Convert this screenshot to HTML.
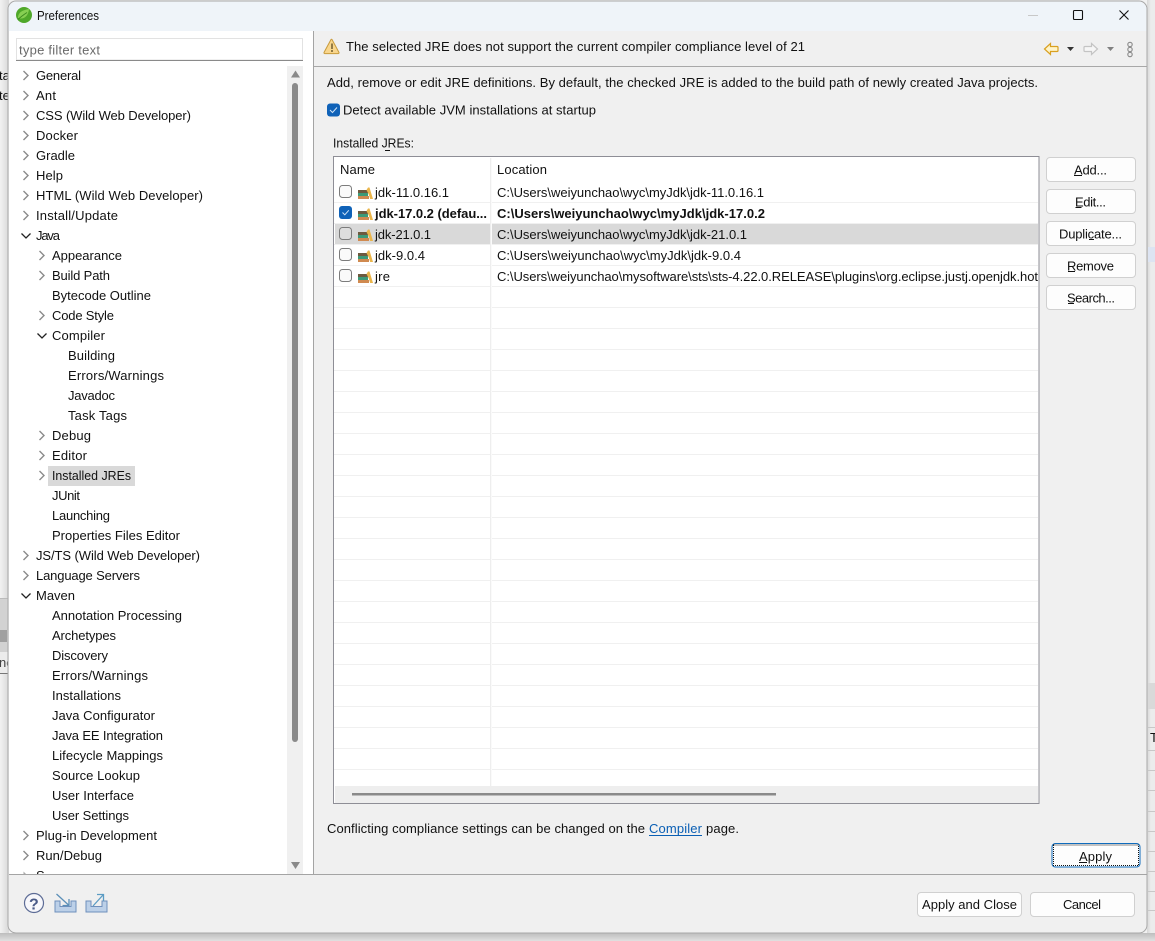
<!DOCTYPE html>
<html><head><meta charset="utf-8"><title>Preferences</title>
<style>
html,body{margin:0;padding:0;width:1155px;height:941px;overflow:hidden;background:#f1f1f1}
svg{display:block;font-family:"Liberation Sans",sans-serif;font-size:13px;fill:#111}
.c{fill:none;stroke:#8a8a8a;stroke-width:1.4}
.d{fill:none;stroke:#222;stroke-width:1.3}
.b{fill:#fdfdfd;stroke:#d0d0d0;stroke-width:1}
.l{stroke:#f0f0f0;stroke-width:1}
.u{stroke:#111;stroke-width:1}
.cb{fill:#fafafa;stroke:#7c7c7c;stroke-width:1}
</style></head><body>
<svg width="1155" height="941" viewBox="0 0 1155 941" xmlns="http://www.w3.org/2000/svg">
<defs>
<linearGradient id="sl" x1="0" x2="1"><stop offset="0" stop-color="#f2f2f2"/><stop offset="1" stop-color="#d8d8d8"/></linearGradient>
<linearGradient id="sr" x1="0" x2="1"><stop offset="0" stop-color="#d2d2d2"/><stop offset="1" stop-color="#ececec"/></linearGradient>
<linearGradient id="sb" x1="0" x2="0" y1="0" y2="1"><stop offset="0" stop-color="#bdbdbd"/><stop offset="1" stop-color="#e0e0e0"/></linearGradient>
<g id="jre">
<path d="M0 5h10v3h-10z" fill="#6d5a3f"/><path d="M0 8h10v3h-10z" fill="#3c9a78"/><path d="M0 11h11v3h-11z" fill="#d08a50"/>
<path d="M8.500 5l1.500-2.500h1.500l3.500 11.500h-2.800l-1.400-4.500z" fill="#eab54a"/>
</g>
</defs>
<rect width="1155" height="941" fill="#f1f1f1"/>
<rect x="0" y="0" width="9" height="941" fill="url(#sl)"/>
<rect x="0" y="598" width="9" height="54" fill="#d2d2d2"/>
<rect x="0" y="630" width="7" height="12" fill="#a0a0a0"/>
<rect x="0" y="652" width="9" height="21" fill="#ececec"/>
<path d="M0 598.500h9" stroke="#bbb"/>
<path d="M0 673.500h9" stroke="#777"/>
<svg x="0" y="60" width="8" height="50" viewBox="0 60 8 50"><text x="-1" y="80">ta</text><text x="-1" y="100">te</text></svg>
<svg x="0" y="652" width="8" height="20" viewBox="0 652 8 20"><text x="-1" y="667" fill="#444">ne</text></svg>
<rect x="1147" y="0" width="8" height="941" fill="#ececec"/>
<rect x="1147" y="0" width="4" height="941" fill="url(#sr)" opacity=".8"/>
<rect x="1148" y="247" width="7" height="15" fill="#dde4f2"/>
<rect x="1148" y="683" width="7" height="26" fill="#d9d9d9"/>
<path d="M1148 727.500h7M1148 750.500h7M1148 770.500h7M1148 790.500h7M1148 811.500h7M1148 831.500h7M1148 851.500h7M1148 871.500h7M1148 891.500h7M1148 910.500h7" stroke="#c8c8c8"/>
<text x="1150" y="742">T</text>
<rect x="0" y="933" width="1155" height="8" fill="url(#sb)"/>
<path d="M8 9a8 8 0 0 1 8-8H1139a8 8 0 0 1 8 8V925a8 8 0 0 1-8 8H16a8 8 0 0 1-8-8Z" fill="#f0f0f0" stroke="#a8a8a8" stroke-width="1"/>
<path d="M8.500 31V9a8 8 0 0 1 8-7.500H1139a8 8 0 0 1 7.500 7.500V31Z" fill="#eff4f9"/>
<rect x="9" y="31" width="304" height="843" fill="#fff"/>
<rect x="287" y="66" width="16" height="808" fill="#f0f0f0"/>
<path d="M313.500 31V874" stroke="#a4a4a4"/>
<path d="M314 66.500H1147" stroke="#a8a8a8"/>
<path d="M9 874.500H1147" stroke="#a4a4a4"/>

<circle cx="24" cy="15" r="8" fill="#4fa82a"/>
<path d="M18 18c0-6 5-8 11-9-.5 6-4 10-9 9.500z" fill="#86cf52"/>
<path d="M18 19.500c3-3 6-5 9-7" stroke="#3c8a20" fill="none"/>
<text x="37" y="20" textLength="62" lengthAdjust="spacingAndGlyphs">Preferences</text>
<path d="M1028 15.500h10" stroke="#c8c8c8"/>
<rect x="1073.500" y="10.500" width="9" height="9" rx="1" fill="none" stroke="#111" stroke-width="1.100"/>
<path d="M1119.500 10.500l9 9M1128.500 10.500l-9 9" stroke="#111" stroke-width="1.100"/>

<rect x="16.500" y="38.500" width="286" height="21.500" fill="#fff" stroke="#e2e2e2"/>
<path d="M16 60.500H303" stroke="#8a8a8a"/>
<text x="19" y="54.500" textLength="81" fill="#6a6a6a">type filter text</text>

<g>
<text x="36" y="80" textLength="45">General</text>
<text x="36" y="100" textLength="20">Ant</text>
<text x="36" y="120" textLength="155">CSS (Wild Web Developer)</text>
<text x="36" y="140" textLength="42">Docker</text>
<text x="36" y="160" textLength="39">Gradle</text>
<text x="36" y="180" textLength="27">Help</text>
<text x="36" y="200" textLength="167">HTML (Wild Web Developer)</text>
<text x="36" y="220" textLength="82">Install/Update</text>
<text x="36" y="240" textLength="24">Java</text>
<text x="52" y="260" textLength="70">Appearance</text>
<text x="52" y="280" textLength="58">Build Path</text>
<text x="52" y="300" textLength="99">Bytecode Outline</text>
<text x="52" y="320" textLength="62">Code Style</text>
<text x="52" y="340" textLength="53">Compiler</text>
<text x="68" y="360" textLength="47">Building</text>
<text x="68" y="380" textLength="96">Errors/Warnings</text>
<text x="68" y="400" textLength="47">Javadoc</text>
<text x="68" y="420" textLength="59">Task Tags</text>
<text x="52" y="440" textLength="39">Debug</text>
<text x="52" y="460" textLength="35">Editor</text>
<rect x="48" y="466" width="87" height="20" fill="#d9d9d9"/>
<text x="52" y="480" textLength="79" lengthAdjust="spacingAndGlyphs">Installed JREs</text>
<text x="52" y="500" textLength="28">JUnit</text>
<text x="52" y="520" textLength="58">Launching</text>
<text x="52" y="540" textLength="128">Properties Files Editor</text>
<text x="36" y="560" textLength="164">JS/TS (Wild Web Developer)</text>
<text x="36" y="580" textLength="104">Language Servers</text>
<text x="36" y="600" textLength="39">Maven</text>
<text x="52" y="620" textLength="130">Annotation Processing</text>
<text x="52" y="640" textLength="64">Archetypes</text>
<text x="52" y="660" textLength="56">Discovery</text>
<text x="52" y="680" textLength="96">Errors/Warnings</text>
<text x="52" y="700" textLength="69">Installations</text>
<text x="52" y="720" textLength="103">Java Configurator</text>
<text x="52" y="740" textLength="111">Java EE Integration</text>
<text x="52" y="760" textLength="111">Lifecycle Mappings</text>
<text x="52" y="780" textLength="88">Source Lookup</text>
<text x="52" y="800" textLength="82">User Interface</text>
<text x="52" y="820" textLength="77">User Settings</text>
<text x="36" y="840" textLength="121">Plug-in Development</text>
<text x="36" y="860" textLength="66">Run/Debug</text>
</g>
<svg x="36" y="866" width="10" height="8" viewBox="0 866 10 8"><text x="0" y="880">S</text></svg>

<path class="c" d="M23.500 71l4.500 4.500-4.500 4.500M23.500 91l4.500 4.500-4.500 4.500M23.500 111l4.500 4.500-4.500 4.500M23.500 131l4.500 4.500-4.500 4.500M23.500 151l4.500 4.500-4.500 4.500M23.500 171l4.500 4.500-4.500 4.500M23.500 191l4.500 4.500-4.500 4.500M23.500 211l4.500 4.500-4.500 4.500M23.500 551l4.500 4.500-4.500 4.500M23.500 571l4.500 4.500-4.500 4.500M23.500 831l4.500 4.500-4.500 4.500M23.500 851l4.500 4.500-4.500 4.500M39.500 251l4.500 4.500-4.500 4.500M39.500 271l4.500 4.500-4.500 4.500M39.500 311l4.500 4.500-4.500 4.500M39.500 431l4.500 4.500-4.500 4.500M39.500 451l4.500 4.500-4.500 4.500M39.500 471l4.500 4.500-4.500 4.500"/>
<path class="d" d="M21.500 233.500l4.500 4.500 4.500-4.500M21.500 593.500l4.500 4.500 4.500-4.500M37.500 333.500l4.500 4.500 4.500-4.500"/>
<path d="M23.500 871.500l2.500 2.500h-2.500z" fill="#aaa"/>

<path d="M295.500 70.500l-4.500 7h9z" fill="#8a8a8a"/>
<rect x="292" y="83" width="6" height="659" rx="3" fill="#8a8a8a"/>
<path d="M291 862h9l-4.500 7z" fill="#8a8a8a"/>

<path d="M332 39.500l7 13a.8.8 0 0 1-.7 1.100h-13.600a.8.8 0 0 1-.7-1.100l7-13a.6.6 0 0 1 1 0z" fill="#f9d68c" stroke="#c79a3c"/>
<path d="M332 43.500v5.500M332 50v2" stroke="#5a4a20" stroke-width="1.300"/>
<text x="346" y="51" textLength="459">The selected JRE does not support the current compiler compliance level of 21</text>
<path d="M1044.500 49l6-5.500v3h6.500a1 1 0 0 1 1 1v3a1 1 0 0 1-1 1h-6.500v3z" fill="#fff4c8" stroke="#d9a020" stroke-width="1.200"/>
<path d="M1067 47h7l-3.500 4z" fill="#333"/>
<path d="M1097.500 49l-6-5.500v3h-6.500a1 1 0 0 0-1 1v3a1 1 0 0 0 1 1h6.500v3z" fill="#f6f6f6" stroke="#c4c4c4" stroke-width="1.200"/>
<path d="M1107 47h7l-3.500 4z" fill="#808080"/>
<g fill="#eee" stroke="#8a8a8a" stroke-width="1.100"><circle cx="1130" cy="44.500" r="2.200"/><circle cx="1130" cy="49.500" r="2.200"/><circle cx="1130" cy="54.500" r="2.200"/></g>

<text x="327" y="87" textLength="711">Add, remove or edit JRE definitions. By default, the checked JRE is added to the build path of newly created Java projects.</text>
<rect x="327" y="103.500" width="13" height="13" rx="3" fill="#0f62b8"/>
<path d="M330 110l2.500 2.500 4.500-5" fill="none" stroke="#cfe3f7" stroke-width="1"/>
<text x="343" y="114.500" textLength="253">Detect available JVM installations at startup</text>
<text x="333" y="147.500" textLength="81" lengthAdjust="spacingAndGlyphs">Installed JREs:</text>
<path class="u" d="M385 150.500h5"/>

<rect x="333.500" y="156.500" width="705.500" height="647" fill="#fff" stroke="#8e8e96" stroke-width="1"/>
<rect x="335" y="786" width="703" height="17" fill="#eeeeee"/>
<rect x="352" y="793" width="424" height="2.500" fill="#8a8a8a"/>
<rect x="335" y="224" width="703" height="20" fill="#d9d9d9"/>
<path class="l" d="M334 202.500H1038M334 223.500H1038M334 244.500H1038M334 265.500H1038M334 286.500H1038M334 307.500H1038M334 328.500H1038M334 349.500H1038M334 370.500H1038M334 391.500H1038M334 412.500H1038M334 433.500H1038M334 454.500H1038M334 475.500H1038M334 496.500H1038M334 517.500H1038M334 538.500H1038M334 559.500H1038M334 580.500H1038M334 601.500H1038M334 622.500H1038M334 643.500H1038M334 664.500H1038M334 685.500H1038M334 706.500H1038M334 727.500H1038M334 748.500H1038M334 769.500H1038"/>
<path d="M490.500 158V786" stroke="#eeeeee" fill="none"/>
<path d="M491.500 158V786" stroke="#fafafa" fill="none"/>
<text x="340" y="174" textLength="35">Name</text>
<text x="497" y="174" textLength="50">Location</text>

<rect class="cb" x="339.500" y="185.500" width="12" height="12" rx="3"/>
<use href="#jre" x="358" y="185"/>
<text x="375" y="197" textLength="74">jdk-11.0.16.1</text>
<text x="497" y="197" textLength="267">C:\Users\weiyunchao\wyc\myJdk\jdk-11.0.16.1</text>

<rect x="339" y="206" width="13" height="13" rx="3" fill="#0f62b8"/>
<path d="M342.500 212.500l2.300 2.300 4-4.500" fill="none" stroke="#cfe3f7" stroke-width="1"/>
<use href="#jre" x="358" y="206"/>
<text x="375" y="218" textLength="112" font-weight="bold">jdk-17.0.2 (defau...</text>
<text x="497" y="218" textLength="268" font-weight="bold">C:\Users\weiyunchao\wyc\myJdk\jdk-17.0.2</text>

<rect class="cb" x="339.500" y="227.500" width="12" height="12" rx="3" style="fill:#dedede"/>
<use href="#jre" x="358" y="227"/>
<text x="375" y="239" textLength="56">jdk-21.0.1</text>
<text x="497" y="239" textLength="250">C:\Users\weiyunchao\wyc\myJdk\jdk-21.0.1</text>

<rect class="cb" x="339.500" y="248.500" width="12" height="12" rx="3"/>
<use href="#jre" x="358" y="248"/>
<text x="375" y="260" textLength="50">jdk-9.0.4</text>
<text x="497" y="260" textLength="244">C:\Users\weiyunchao\wyc\myJdk\jdk-9.0.4</text>

<rect class="cb" x="339.500" y="269.500" width="12" height="12" rx="3"/>
<use href="#jre" x="358" y="269"/>
<text x="375" y="281" textLength="15">jre</text>
<text x="497" y="281" textLength="541">C:\Users\weiyunchao\mysoftware\sts\sts-4.22.0.RELEASE\plugins\org.eclipse.justj.openjdk.hot</text>

<rect class="b" x="1046.500" y="157.500" width="89" height="24" rx="3.500"/>
<text x="1074" y="174.500" textLength="33">Add...</text><path class="u" d="M1074 175.500h8"/>
<rect class="b" x="1046.500" y="189.500" width="89" height="24" rx="3.500"/>
<text x="1075" y="206.500" textLength="31">Edit...</text><path class="u" d="M1075.500 207.500h6"/>
<rect class="b" x="1046.500" y="221.500" width="89" height="24" rx="3.500"/>
<text x="1059" y="238.500" textLength="63">Duplicate...</text><path class="u" d="M1089 239.500h5"/>
<rect class="b" x="1046.500" y="253.500" width="89" height="24" rx="3.500"/>
<text x="1067" y="270.500" textLength="47">Remove</text><path class="u" d="M1068 271.500h7"/>
<rect class="b" x="1046.500" y="285.500" width="89" height="24" rx="3.500"/>
<text x="1067" y="302.500" textLength="48">Search...</text><path class="u" d="M1068 303.500h6"/>

<text x="327" y="833" textLength="318">Conflicting compliance settings can be changed on the</text>
<text x="649" y="833" textLength="53" fill="#0a5fb4">Compiler</text><path d="M649 835.500h53" stroke="#0a5fb4"/>
<text x="706" y="833" textLength="33">page.</text>

<rect x="1052" y="843.500" width="88" height="23.500" rx="3.500" fill="#fdfdfd" stroke="#0f6cbd"/>
<rect x="1053.500" y="845" width="85" height="20.500" fill="none" stroke="#111" stroke-dasharray="1 1"/>
<text x="1079" y="861" textLength="33">Apply</text><path class="u" d="M1079 862.500h8"/>

<rect class="b" x="917.500" y="892.500" width="104" height="24" rx="3.500"/>
<text x="922" y="909" textLength="95">Apply and Close</text>
<rect class="b" x="1030.500" y="892.500" width="104" height="24" rx="3.500"/>
<text x="1063" y="909" textLength="38">Cancel</text>

<circle cx="34" cy="903" r="9.500" fill="#f7f7fb" stroke="#5d6c96" stroke-width="1.200"/>
<text x="29" y="909.500" font-size="16" font-weight="bold" fill="#4a5a88" textLength="10">?</text>
<path d="M55 901v11h21v-11h-5v5.500h-11v-5.500z" fill="#bcd0e8" stroke="#6e8fbc"/>
<path d="M56.500 894l12 11M69 899v6.500h-6.500" fill="none" stroke="#5b8fb8" stroke-width="1.300"/>
<path d="M86 901v11h21v-11h-5v5.500h-11v-5.500z" fill="#bcd0e8" stroke="#6e8fbc"/>
<path d="M93 906l10-11M97 894.500h6.500v6.500" fill="none" stroke="#5b9cc4" stroke-width="1.300"/>
</svg>
</body></html>
